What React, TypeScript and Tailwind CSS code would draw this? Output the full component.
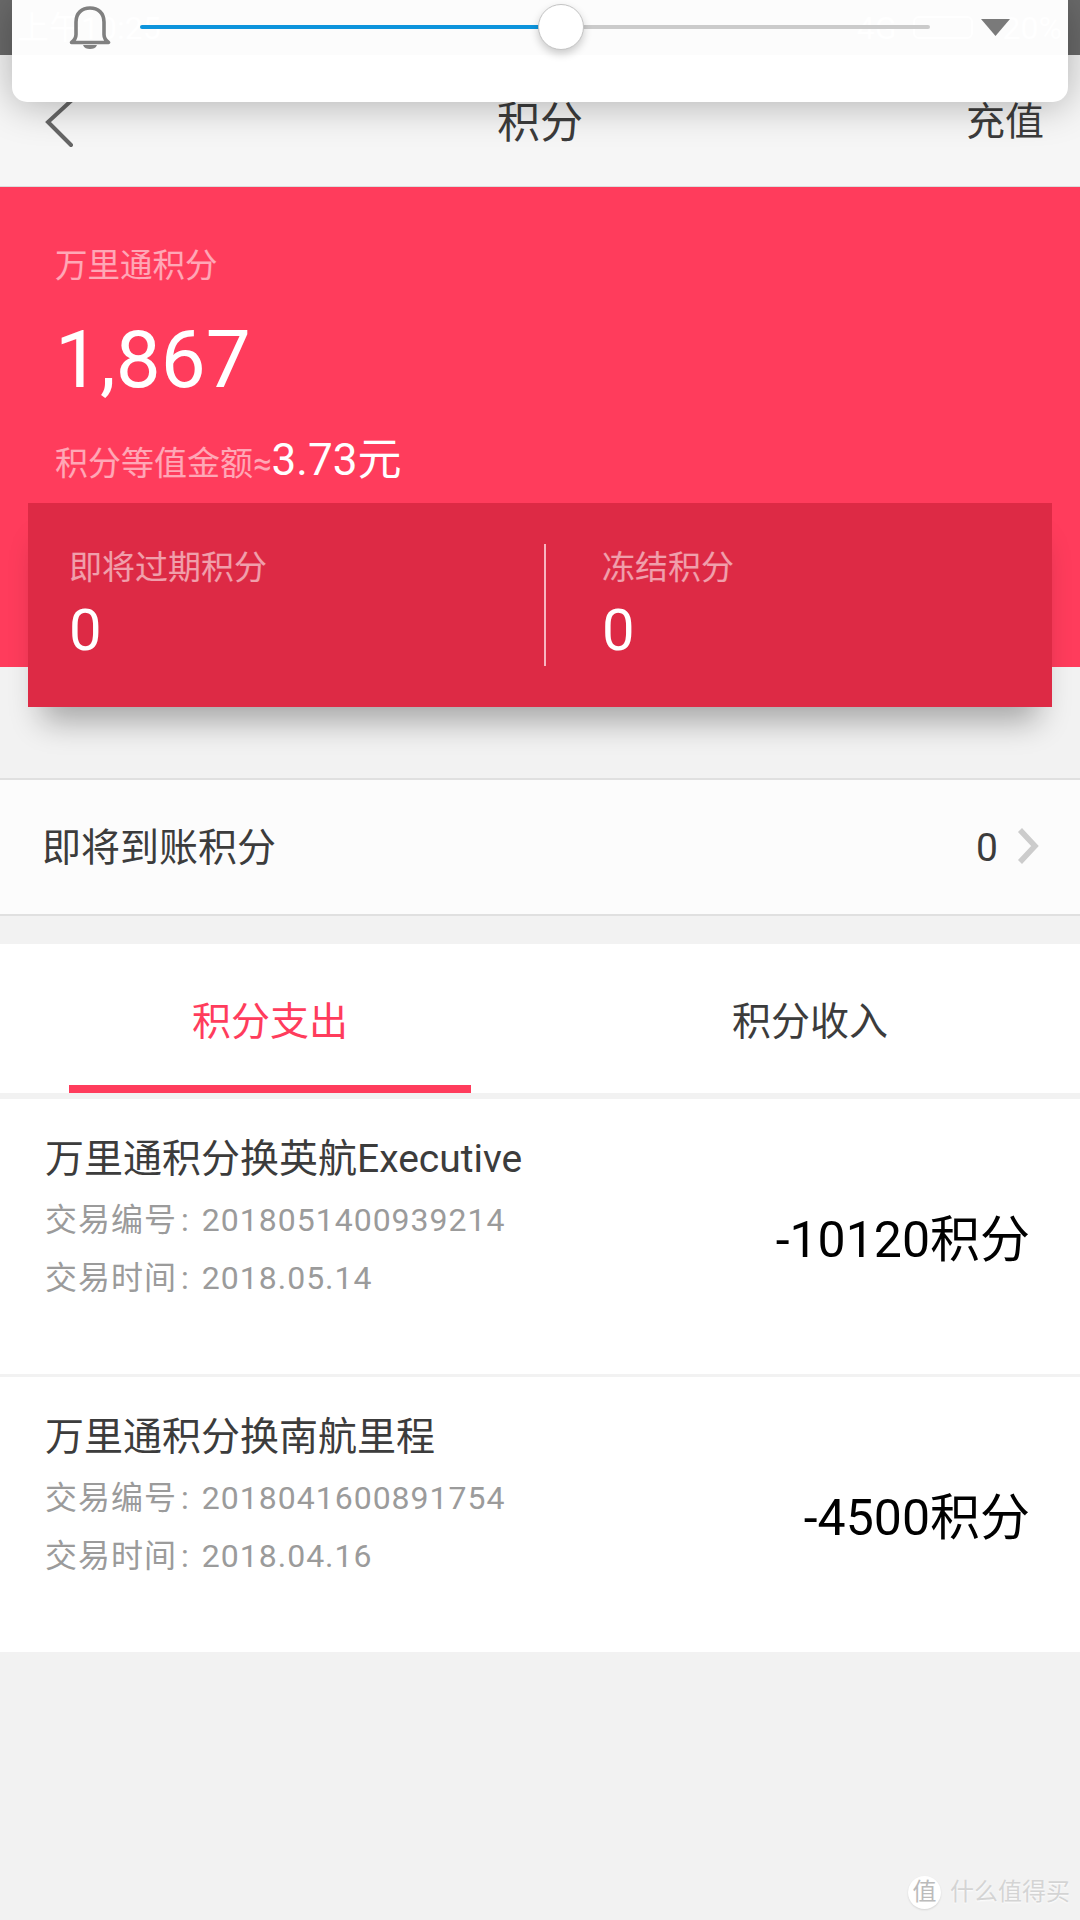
const font = { fontFamily: 'Roboto, "Noto Sans CJK SC", sans-serif' };

const records = [
  { title: "万里通积分换英航Executive", no: "2018051400939214", date: "2018.05.14", amount: "-10120积分" },
  { title: "万里通积分换南航里程", no: "2018041600891754", date: "2018.04.16", amount: "-4500积分" },
];

const VolumePanel = () => (
  <div className="absolute left-[12px] top-0 z-10 h-[102px] w-[1056px] rounded-b-[15px] bg-white shadow-[0_2px_40px_rgba(0,0,0,0.3)]">
    <div className="relative flex h-[55px] items-center bg-[#fcfcfc] text-[32px] text-white">
      <span className="absolute left-[5px]">上午10:25</span>
      <span className="absolute right-[6px] flex items-center gap-[16px]">
        4G<span className="h-[23px] w-[60px] rounded-[6px] border-2 border-white" />
        <span className="ml-[14px]">20%</span>
      </span>
      <svg className="absolute left-[57px] top-[6px]" width="42" height="44" viewBox="0 0 42 44" fill="none" stroke="#808080" strokeWidth="3.6">
        <path d="M2.5 36.5c2-1.5 4.5-4 4.5-8V16C7 7 13 2 21 2s14 5 14 14v12.5c0 4 2.5 6.5 4.5 8H2.5z" strokeLinejoin="round" />
        <path d="M14 39h14c-1 3-4 4-7 4s-6-1-7-4z" fill="#808080" stroke="none" />
      </svg>
      <div className="absolute left-[128px] top-[25px] flex h-[4px] w-[790px]">
        <div className="h-full w-[410px] rounded-l-full bg-[#0d94dc]" />
        <div className="h-full flex-1 rounded-r-full bg-[#cbcbcb]" />
      </div>
      <div className="absolute left-[526px] top-[4px] h-[46px] w-[46px] rounded-full border border-[#c4c4c4] bg-white shadow-[0_4px_8px_rgba(0,0,0,0.2)]" />
      <svg className="absolute left-[969px] top-[19px]" width="29" height="17" viewBox="0 0 29 17">
        <path d="M0 0h29L14.5 17z" fill="#7a7a7a" />
      </svg>
    </div>
  </div>
);

const App = () => {
  return (
    <div className="relative h-[1920px] w-[1080px] overflow-hidden bg-[#f2f2f2]" style={font}>
      <VolumePanel />
      <div className="h-[55px] bg-[#6b6b6b]" />

      <header className="relative flex h-[132px] items-start justify-between border-b border-[#dcdcdc] bg-[#f6f6f6] pl-[45px] pr-[36px] pt-[42px]">
        <svg width="30" height="50" viewBox="0 0 30 50" fill="none" stroke="#666" strokeWidth="4" strokeLinecap="round" className="mt-[1px]">
          <path d="M27 2L3 24l23 23" />
        </svg>
        <span className="absolute left-0 right-0 top-[40px] text-center text-[43px] leading-[56px] text-[#3c3c3c]">积分</span>
        <span className="text-[39px] leading-[50px] text-[#3c3c3c]">充值</span>
      </header>

      <section className="h-[480px] bg-[#ff3c5c] px-[28px] pt-[56px]">
        <div className="px-[27px]">
          <div className="text-[32.5px] leading-[46px] text-white/55">万里通积分</div>
          <div className="mt-[24px] text-[80px] leading-[94px] text-white">1,867</div>
          <div className="mt-[24px] flex items-baseline text-[33px] leading-[58px] text-white/55">
            积分等值金额≈<span className="text-[44px] text-white">3.73元</span>
          </div>
        </div>
        <div className="mt-[10px] flex h-[204px] w-[1024px] items-start bg-[#dd2a45] pt-[41px] shadow-[0_28px_30px_-14px_rgba(0,0,0,0.32)]">
          <div className="h-[122px] w-[518px] border-r-2 border-[#f8b4c0] pl-[41px]">
            <div className="text-[33px] leading-[48px] text-white/55">即将过期积分</div>
            <div className="text-[58px] leading-[76px] text-white">0</div>
          </div>
          <div className="pl-[56px]">
            <div className="text-[33px] leading-[48px] text-white/55">冻结积分</div>
            <div className="text-[58px] leading-[76px] text-white">0</div>
          </div>
        </div>
      </section>

      <div className="mt-[111px] flex h-[138px] items-center justify-between border-y-2 border-[#e0e0e0] bg-[#fcfcfc] pl-[42px] pr-[41px] pt-[2px] text-[39px] text-[#3c3c3c]">
        <span>即将到账积分</span>
        <div className="flex items-center gap-[19px]">
          <span>0</span>
          <svg width="22" height="36" viewBox="0 0 22 36" fill="none" stroke="#cccccc" strokeWidth="5.5" className="mb-[4px]">
            <path d="M3 2l15 16L3 34" />
          </svg>
        </div>
      </div>

      <nav className="mt-[28px] flex h-[149px] bg-white text-[39px]">
        <div className="flex w-[540px] justify-center">
          <div className="flex h-full w-[402px] items-start justify-center border-b-[8px] border-[#ff3c5c] pt-[49px] text-[#ff3c5c]">积分支出</div>
        </div>
        <div className="flex w-[540px] justify-center pt-[49px] text-[#3c3c3c]">积分收入</div>
      </nav>

      <div className="mt-[6px] flex flex-col gap-[3px]">
        {records.map((r) => (
          <div key={r.no} className="flex h-[275px] items-center justify-between bg-white pl-[45px] pr-[50px]">
            <div className="-mt-[35px]">
              <div className="text-[39px] leading-[56px] text-[#3c3c3c]">{r.title}</div>
              <div className="mt-[4px] text-[32px] leading-[58px] tracking-[1px] text-[#9b9b9b]">
                交易编号<span className="ml-[4px] mr-[12px]">:</span>{r.no}
              </div>
              <div className="text-[32px] leading-[58px] tracking-[1px] text-[#9b9b9b]">
                交易时间<span className="ml-[4px] mr-[12px]">:</span>{r.date}
              </div>
            </div>
            <div className="mt-[8px] text-[50px] text-black">{r.amount}</div>
          </div>
        ))}
      </div>

      <div className="absolute bottom-[10px] right-[10px] flex items-center gap-[9px] text-[24px] text-[#d4d4d4] [text-shadow:0_1px_2px_#fff]">
        <span className="flex h-[33px] w-[33px] items-center justify-center rounded-full bg-white text-[24px] text-[#bbb] shadow-[0_1px_2px_rgba(0,0,0,0.12)]">值</span>
        什么值得买
      </div>
    </div>
  );
};

export default App;
